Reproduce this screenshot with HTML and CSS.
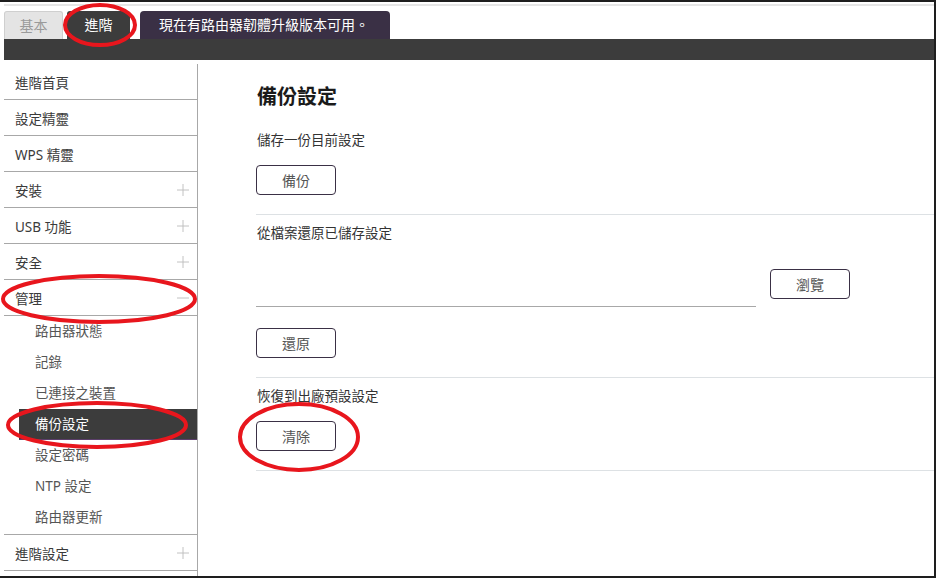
FILE: index.html
```html
<!DOCTYPE html>
<html lang="zh-Hant">
<head>
  <meta charset="UTF-8">
  <meta name="viewport" content="width=device-width, initial-scale=1.0">
  <title>備份設定</title>
  <link rel="stylesheet" href="styles.css">
</head>
<body>
  <div class="screen">
    <div class="topline"></div>

    <div class="tabs">
      <div class="tab tab-basic">基本</div>
      <div class="tab tab-adv">進階</div>
      <div class="notice">現在有路由器韌體升級版本可用。</div>
    </div>
    <div class="bar"></div>

    <div class="layout">
      <nav class="sidebar">
        <div class="nav-item">進階首頁</div>
        <div class="nav-item">設定精靈</div>
        <div class="nav-item">WPS 精靈</div>
        <div class="nav-item">安裝
          <svg class="toggle" viewBox="0 0 13 13"><path d="M0 6.5H13M6.5 0V13"/></svg>
        </div>
        <div class="nav-item">USB 功能
          <svg class="toggle" viewBox="0 0 13 13"><path d="M0 6.5H13M6.5 0V13"/></svg>
        </div>
        <div class="nav-item">安全
          <svg class="toggle" viewBox="0 0 13 13"><path d="M0 6.5H13M6.5 0V13"/></svg>
        </div>
        <div class="nav-item">管理
          <svg class="toggle" viewBox="0 0 13 13"><path d="M0 6.5H13"/></svg>
        </div>
        <div class="submenu">
          <div class="sub-item">路由器狀態</div>
          <div class="sub-item">記錄</div>
          <div class="sub-item">已連接之裝置</div>
          <div class="sub-item active">備份設定</div>
          <div class="sub-item">設定密碼</div>
          <div class="sub-item">NTP 設定</div>
          <div class="sub-item">路由器更新</div>
        </div>
        <div class="nav-item">進階設定
          <svg class="toggle" viewBox="0 0 13 13"><path d="M0 6.5H13M6.5 0V13"/></svg>
        </div>
      </nav>

      <main class="content">
        <h2>備份設定</h2>

        <section class="block">
          <div class="label">儲存一份目前設定</div>
          <button class="btn">備份</button>
        </section>

        <section class="block">
          <div class="label">從檔案還原已儲存設定</div>
          <div class="file-row">
            <div class="file-input"></div>
            <button class="btn">瀏覽</button>
          </div>
          <button class="btn btn-restore">還原</button>
        </section>

        <section class="block">
          <div class="label">恢復到出廠預設設定</div>
          <button class="btn">清除</button>
        </section>
      </main>
    </div>

    <!-- hand-drawn annotation marks -->
    <svg class="marks" viewBox="0 0 936 578">
      <ellipse cx="100" cy="25" rx="35" ry="20"/>
      <ellipse cx="99" cy="299" rx="96" ry="23"/>
      <ellipse cx="97" cy="425" rx="89" ry="22"/>
      <ellipse cx="299" cy="437" rx="59" ry="33"/>
    </svg>
  </div>
</body>
</html>
```

FILE: styles.css
```css
* {
  margin: 0;
  padding: 0;
  box-sizing: border-box;
}

body {
  background-color: #fff;
  font-family: "Noto Sans", "Noto Sans CJK TC", sans-serif;
  color: #333;
}

.screen {
  position: relative;
  width: 936px;
  height: 578px;
  overflow: hidden;
  border-top: 2px solid #1e1e1e;
  border-right: 2px solid #1e1e1e;
  border-bottom: 2px solid #1e1e1e;
}

.topline {
  height: 2px;
  margin: 2px 0 0 4px;
  background-color: #e6e6e6;
}

.tabs {
  display: flex;
  align-items: flex-end;
  height: 28px;
  margin: 5px 0 0 4px;
}

.tab {
  height: 28px;
  line-height: 27px;
  text-align: center;
  font-size: 14px;
  border-radius: 3px 3px 0 0;
}

.tab-basic {
  width: 59px;
  background-color: #e4e4e4;
  border: 1px solid #cfcfcf;
  border-bottom: none;
  color: #9a9a9a;
}

.tab-adv {
  width: 63px;
  margin-left: 4px;
  background-color: #3c3c3c;
  color: #fff;
}

.notice {
  height: 28px;
  margin-left: 10px;
  padding: 0 21px 0 19px;
  line-height: 27px;
  font-size: 14px;
  color: #fff;
  background-color: #3a3045;
  border-radius: 4px 4px 0 0;
}

.bar {
  height: 21px;
  margin-left: 4px;
  background-color: #3c3c3c;
}

.layout {
  display: flex;
  margin-top: 4px;
  height: 512px;
}

.sidebar {
  width: 194px;
  margin-left: 4px;
  border-right: 1px solid #a8a8a8;
  flex-shrink: 0;
}

.nav-item {
  position: relative;
  display: flex;
  align-items: center;
  justify-content: space-between;
  height: 36px;
  padding: 0 8px 0 11px;
  border-bottom: 1px solid #a8a8a8;
  font-size: 13.5px;
  color: #3a3a3a;
}

.toggle {
  width: 12px;
  height: 12px;
  fill: none;
  stroke: #bdbdbd;
  stroke-width: 1;
}

.submenu {
  padding-bottom: 1px;
  border-bottom: 1px solid #a8a8a8;
}

.sub-item {
  height: 31px;
  line-height: 31px;
  padding-left: 31px;
  font-size: 13.5px;
  color: #555;
}

.sub-item.active {
  margin-left: 15px;
  padding-left: 16px;
  background-color: #3c3c3c;
  border-bottom: 1px solid #5b3f6b;
  line-height: 30px;
  color: #fff;
}

.content {
  flex: 1;
  padding-left: 58px;
}

h2 {
  margin: 21px 0 21px 1px;
  font-size: 20px;
  line-height: 24px;
  font-weight: bold;
  color: #1a1a1a;
}

.block {
  padding-bottom: 19px;
  border-bottom: 1px solid #dde1e4;
}

.block + .block {
  padding-top: 8px;
}

.label {
  height: 20px;
  line-height: 20px;
  margin-left: 1px;
  font-size: 13.5px;
  color: #333;
}

.btn {
  display: block;
  width: 80px;
  height: 30px;
  margin-top: 15px;
  background-color: #fff;
  border: 1px solid #3a3045;
  border-radius: 4px;
  font-family: inherit;
  font-size: 14px;
  color: #555;
}

.file-row {
  display: flex;
  align-items: flex-start;
  margin-top: 26px;
}

.file-input {
  width: 500px;
  height: 38px;
  border-bottom: 1px solid #a8a8a8;
}

.file-row .btn {
  margin-top: 0;
  margin-left: 14px;
}

.btn-restore {
  margin-top: 21px;
}

.marks {
  position: absolute;
  top: -2px;
  left: 0;
  width: 936px;
  height: 578px;
  pointer-events: none;
}

.marks ellipse {
  fill: none;
  stroke: #e8161d;
  stroke-width: 4;
}
```
